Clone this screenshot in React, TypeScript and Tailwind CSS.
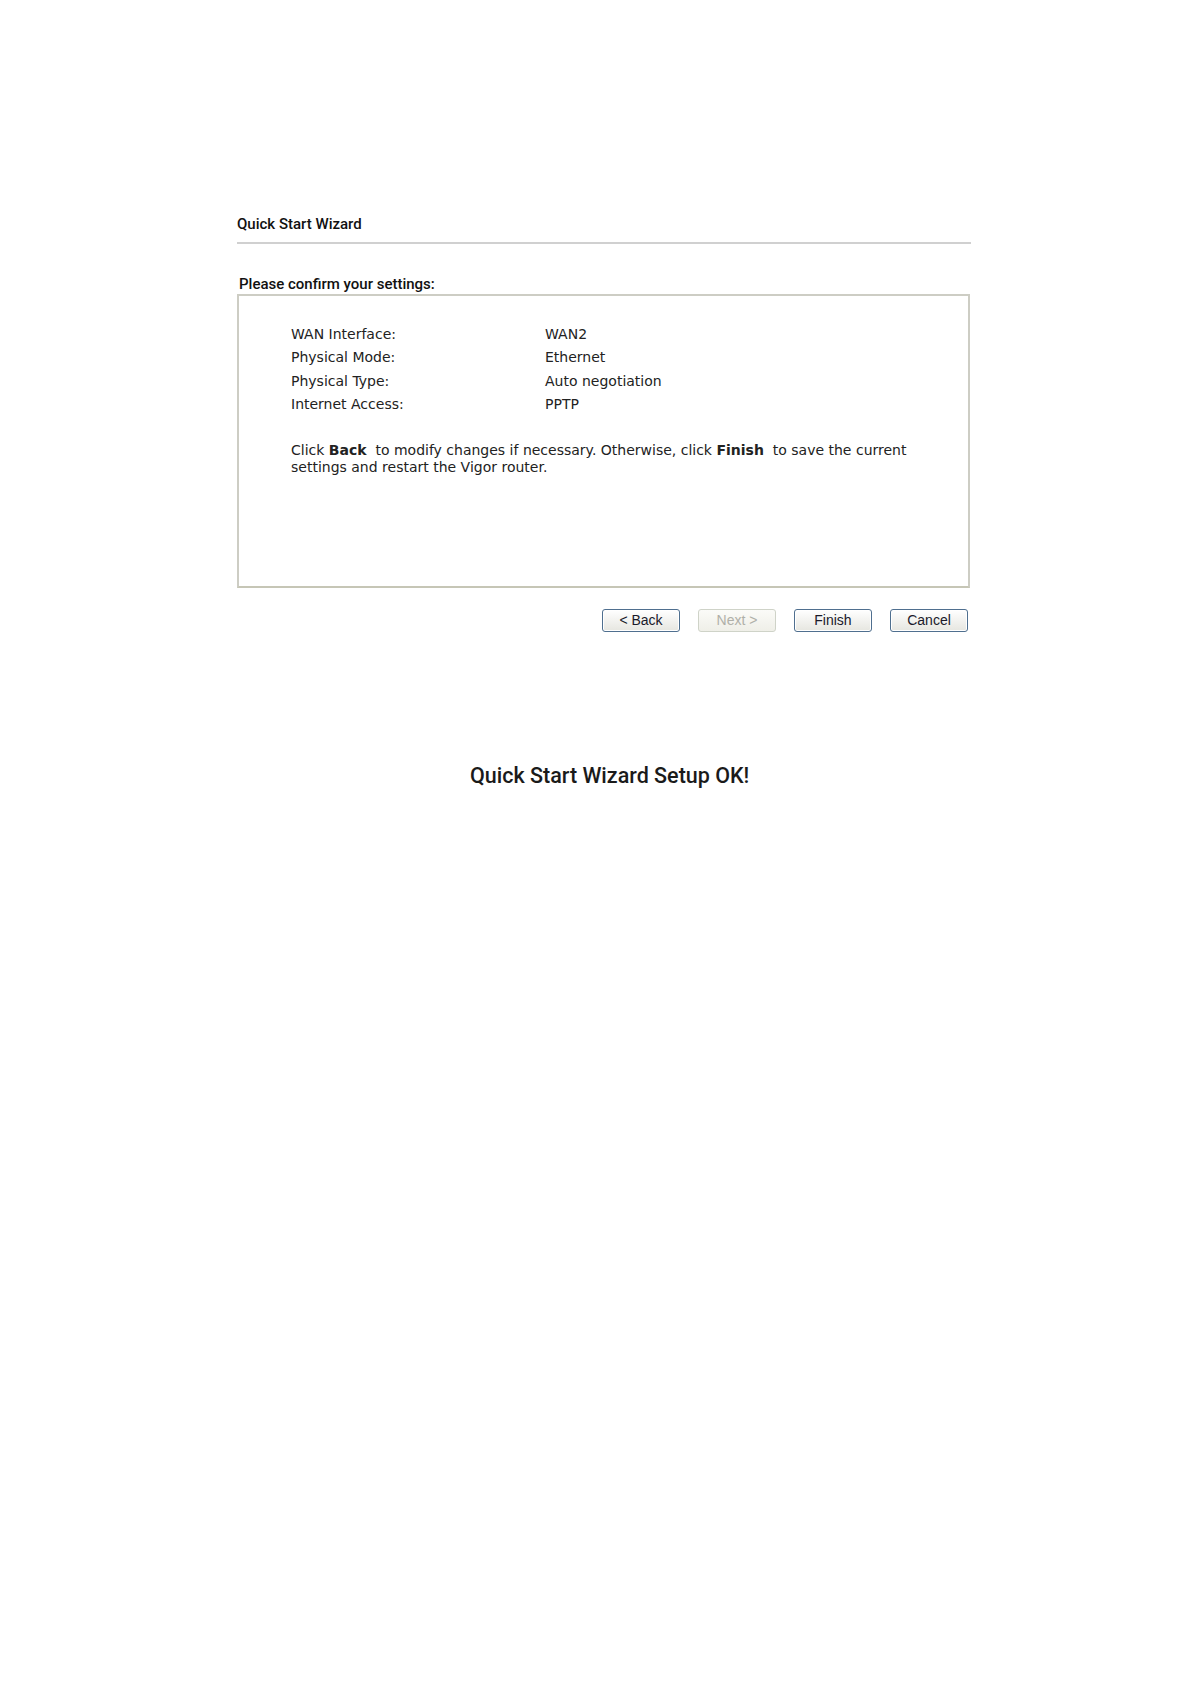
const rows = [
  { label: 'WAN Interface:', value: 'WAN2' },
  { label: 'Physical Mode:', value: 'Ethernet' },
  { label: 'Physical Type:', value: 'Auto negotiation' },
  { label: 'Internet Access:', value: 'PPTP' },
];

const WizardButton = ({ label, disabled }: { label: string; disabled?: boolean }) => (
  <button
    disabled={disabled}
    className={
      disabled
        ? "w-[78px] h-[23px] rounded-[3px] border border-[#cfd3c8] bg-gradient-to-b from-[#fbfbf8] to-[#efefe8] text-[14px] text-[#b0b0a8] font-['Liberation_Sans',Arial,sans-serif]"
        : "w-[78px] h-[23px] rounded-[3px] border border-[#4f6f8f] bg-gradient-to-b from-white to-[#e6e6e0] shadow-[inset_0_0_0_1px_#ffffff] text-[14px] text-[#1a1a2a] font-['Liberation_Sans',Arial,sans-serif]"
    }
  >
    {label}
  </button>
);

export default function App() {
  return (
    <div className="min-h-[1684px] bg-white">
      <div className="ml-[237px] w-[734px] pt-[214px]">
        <div className="h-[20px] leading-[20px] text-[15px] font-medium text-[#111] font-['Roboto',Arial,sans-serif]">
          Quick Start Wizard
        </div>
        <div className="mt-[8px] h-[2px] bg-[#d0d0d0]" />

        <div className="mt-[30px] pl-[2px] h-[20px] leading-[20px] text-[15px] font-medium text-[#111] font-['Roboto',Arial,sans-serif]">
          Please confirm your settings:
        </div>

        <div className="h-[294px] w-[733px] border-2 border-[#cdcdc4] border-b-[#c6c6b6] bg-white pl-[52px] pt-[27px] font-['DejaVu_Sans',Tahoma,sans-serif] text-[14px] text-[#222]">
          {rows.map((r) => (
            <div key={r.label} className="flex h-[23.3px] items-center">
              <span className="w-[254px]">{r.label}</span>
              <span>{r.value}</span>
            </div>
          ))}
          <p className="mt-[26px] w-[650px] leading-[17px]">
            Click <b className="font-bold">Back</b>&nbsp; to modify changes if necessary. Otherwise, click{' '}
            <b className="font-bold">Finish</b>&nbsp; to save the current settings and restart the Vigor router.
          </p>
        </div>

        <div className="mt-[21px] flex justify-end gap-[18px] pr-[3px]">
          <WizardButton label="< Back" />
          <WizardButton label="Next >" disabled />
          <WizardButton label="Finish" />
          <WizardButton label="Cancel" />
        </div>

        <div className="mt-[130px] pl-[233px] h-[28px] leading-[28px] text-[21.5px] font-medium text-[#1a1a1a] font-['Roboto',Arial,sans-serif]">
          Quick Start Wizard Setup OK!
        </div>
      </div>
    </div>
  );
}
